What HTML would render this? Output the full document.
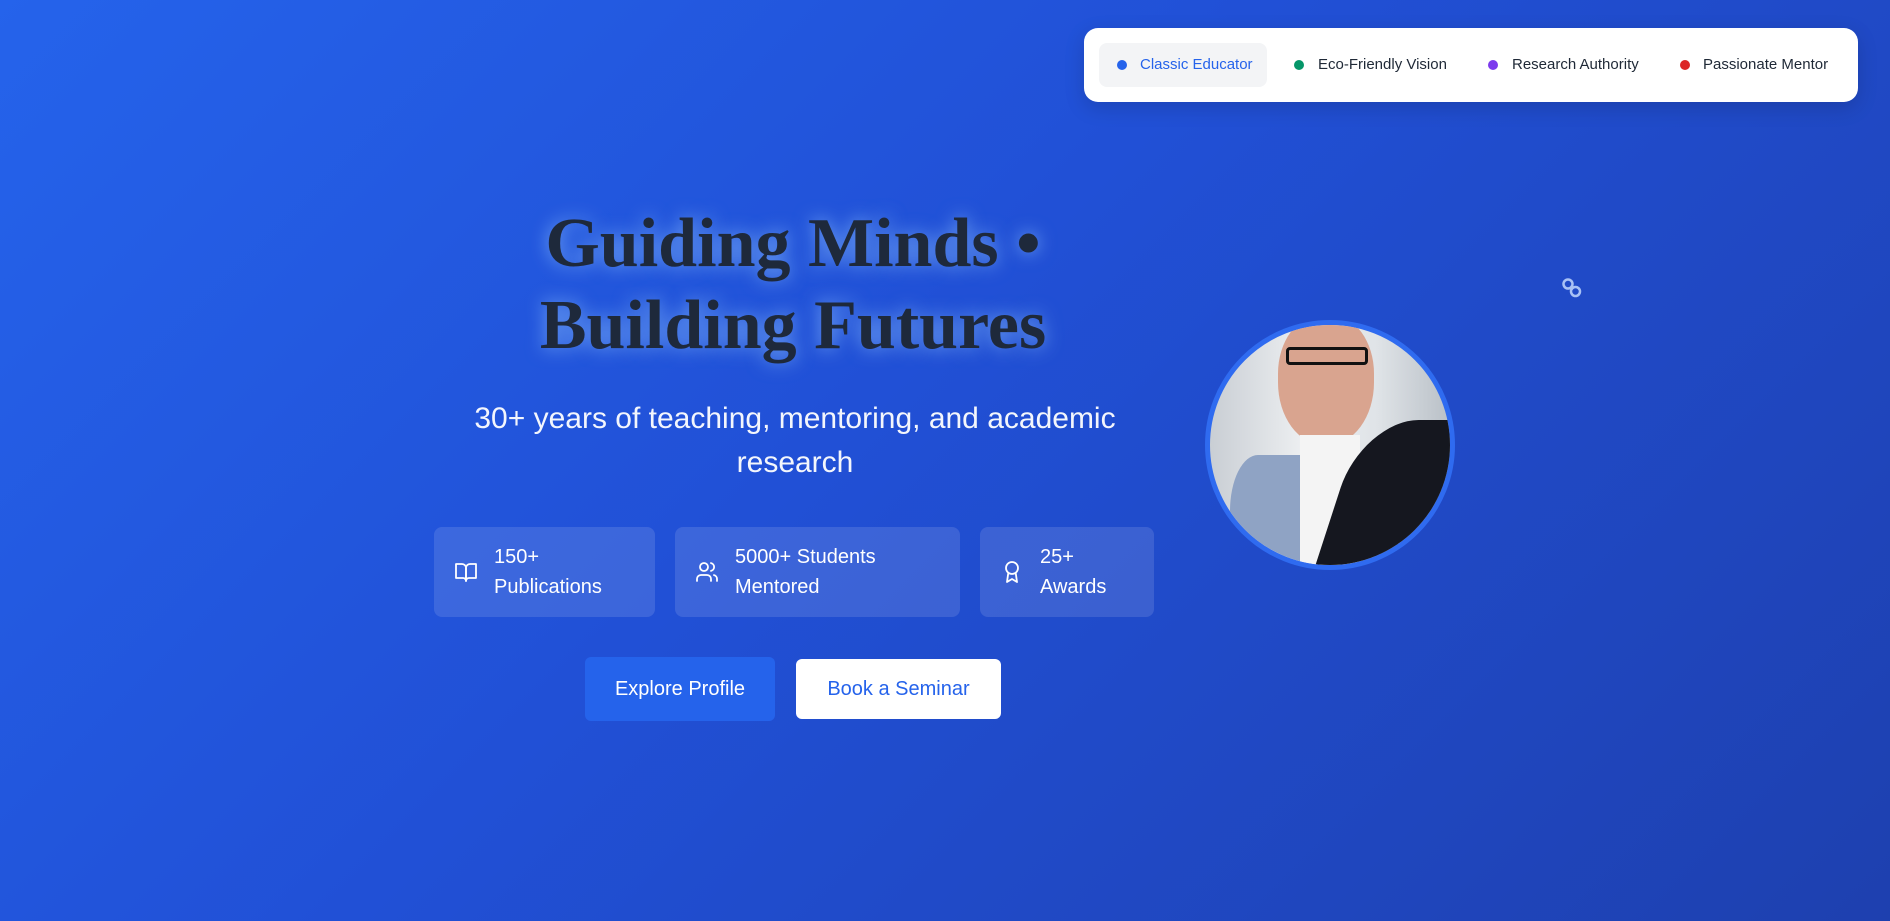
<!DOCTYPE html>
<html><head><style>
*{margin:0;padding:0;box-sizing:border-box}
body{width:1890px;height:921px;overflow:hidden;font-family:"Liberation Sans",Arial,sans-serif;background:linear-gradient(135deg,#2563eb 0%,#2150d6 45%,#1e40af 100%);position:relative}
.nav{position:absolute;left:1084px;top:28px;width:774px;height:74px;background:#fff;border-radius:14px;box-shadow:0 6px 20px rgba(0,0,0,.15)}
.pill{position:absolute;left:15px;top:15px;width:168px;height:44px;background:#f3f4f6;border-radius:8px}
.it{position:absolute;top:0;height:74px;line-height:74px;font-size:15px;color:#1f2937;white-space:nowrap}
.dot{position:absolute;top:32px;width:10px;height:10px;border-radius:50%}
h1{position:absolute;left:493px;width:600px;top:203px;text-align:center;font-family:"Liberation Serif",serif;font-weight:bold;font-size:70px;line-height:82px;color:#1e293b;text-shadow:0 0 18px rgba(147,197,253,.7)}
.sub{position:absolute;left:420px;width:750px;top:397px;text-align:center;color:#fff;font-size:30px;line-height:44px;opacity:.95}
.card{position:absolute;top:527px;height:90px;background:rgba(255,255,255,.12);border-radius:8px;color:#fff;font-size:20px;line-height:30px}
.card svg{position:absolute;left:20px;top:33px}
.card div{position:absolute;left:60px;top:15px;white-space:nowrap}
.btn{position:absolute;border-radius:6px;font-size:20px;text-align:center}
</style></head><body>
<div class="nav">
<div class="pill"></div>
<span class="dot" style="left:33px;background:#2563eb"></span><span class="it" style="left:56px;color:#2563eb">Classic Educator</span>
<span class="dot" style="left:210px;background:#059669"></span><span class="it" style="left:234px">Eco-Friendly Vision</span>
<span class="dot" style="left:404px;background:#7c3aed"></span><span class="it" style="left:428px">Research Authority</span>
<span class="dot" style="left:596px;background:#dc2626"></span><span class="it" style="left:619px">Passionate Mentor</span>
</div>
<h1>Guiding Minds •<br>Building Futures</h1>
<div class="sub">30+ years of teaching, mentoring, and academic research</div>
<div class="card" style="left:434px;width:221px"><svg width="24" height="24" viewBox="0 0 24 24" fill="none" stroke="#fff" stroke-width="1.8" stroke-linecap="round" stroke-linejoin="round"><path d="M2 4h6a4 4 0 0 1 4 4v13a3 3 0 0 0-3-3H2z"/><path d="M22 4h-6a4 4 0 0 0-4 4v13a3 3 0 0 1 3-3h7z"/></svg><div>150+<br>Publications</div></div>
<div class="card" style="left:675px;width:285px"><svg width="24" height="24" viewBox="0 0 24 24" fill="none" stroke="#fff" stroke-width="1.8" stroke-linecap="round" stroke-linejoin="round"><circle cx="9" cy="7" r="4"/><path d="M2 21v-2a4 4 0 0 1 4-4h6a4 4 0 0 1 4 4v2"/><path d="M16 3.1a4 4 0 0 1 0 7.8M22 21v-2a4 4 0 0 0-3-3.9"/></svg><div>5000+ Students<br>Mentored</div></div>
<div class="card" style="left:980px;width:174px"><svg width="24" height="24" viewBox="0 0 24 24" fill="none" stroke="#fff" stroke-width="1.8" stroke-linecap="round" stroke-linejoin="round"><circle cx="12" cy="8" r="6"/><path d="M8.2 13.5L7 22l5-3 5 3-1.2-8.5"/></svg><div>25+<br>Awards</div></div>
<div class="btn" style="left:585px;top:657px;width:190px;height:64px;line-height:64px;background:#2563eb;color:#fff">Explore Profile</div>
<div class="btn" style="left:796px;top:659px;width:205px;height:60px;line-height:60px;background:#fff;color:#2563eb">Book a Seminar</div>
<div style="position:absolute;left:1205px;top:320px;width:250px;height:250px;border-radius:50%;border:5px solid #2f6bf0;overflow:hidden;background:linear-gradient(90deg,#c9ced4,#eef0f2 40%,#dfe3e7 70%,#b9c0c7)">
 <div style="position:absolute;left:68px;top:-10px;width:96px;height:130px;border-radius:45% 45% 48% 48%;background:#d9a48f"></div>
 <div style="position:absolute;left:76px;top:22px;width:82px;height:18px;border:3px solid #111;border-radius:4px"></div>
 <div style="position:absolute;left:90px;top:110px;width:60px;height:150px;background:#f4f4f4"></div>
 <div style="position:absolute;left:125px;top:95px;width:140px;height:170px;background:#15171f;border-radius:40% 0 0 0;transform:skewX(-18deg)"></div>
 <div style="position:absolute;left:20px;top:130px;width:70px;height:140px;background:#8fa3c4;border-radius:40% 0 0 0"></div>
</div>
<svg style="position:absolute;left:1561px;top:277px" width="22" height="22" viewBox="0 0 22 22" fill="none" stroke="#a9c2f5" stroke-width="2.5"><circle cx="7" cy="7" r="4.5"/><circle cx="14.5" cy="14.5" r="4.5"/></svg>
</body></html>
